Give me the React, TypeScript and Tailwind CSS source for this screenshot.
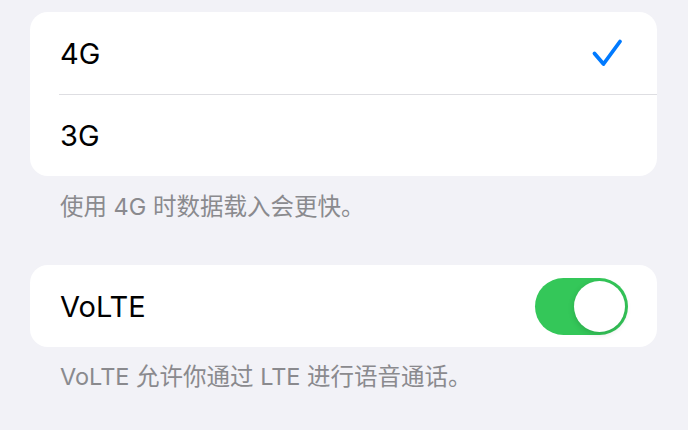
import React from "react";

const font = { fontFamily: 'Inter, "Noto Sans CJK SC", sans-serif' };

export default function App() {
  return (
    <div className="w-[688px] h-[430px] bg-[#f2f2f7] overflow-hidden pt-[12px] pl-[30px] pr-[31px]" style={font}>
      <div className="bg-white rounded-[18px] overflow-hidden">
        <div className="h-[82px] flex items-center justify-between pl-[30px] pr-[34px]">
          <span className="text-[29px] text-black leading-none">4G</span>
          <svg width="32" height="30" viewBox="0 0 32 30" fill="none">
            <path d="M3.5 15.5 L12.5 26 L29 3.5" stroke="#007aff" strokeWidth="3.8" strokeLinecap="round" strokeLinejoin="round" />
          </svg>
        </div>
        <div className="ml-[29px] h-px bg-[#dedee2]" />
        <div className="h-[81px] flex items-center pl-[30px]">
          <span className="text-[29px] text-black leading-none">3G</span>
        </div>
      </div>
      <div className="mt-[16px] pl-[30px] text-[23.5px] leading-[30px] text-[#8a8a8e]">使用 4G 时数据载入会更快。</div>
      <div className="mt-[43px] bg-white rounded-[18px] h-[82px] flex items-center justify-between pl-[30px] pr-[29px]">
        <span className="text-[29px] text-black leading-none">VoLTE</span>
        <div className="w-[93px] h-[57px] rounded-full bg-[#34c759] flex items-center justify-end pr-[3px]">
          <div className="w-[51px] h-[51px] rounded-full bg-white shadow-[0_2px_6px_rgba(0,0,0,0.15)]" />
        </div>
      </div>
      <div className="mt-[15px] pl-[30px] text-[23.5px] leading-[30px] text-[#8a8a8e]">VoLTE 允许你通过 LTE 进行语音通话。</div>
    </div>
  );
}
